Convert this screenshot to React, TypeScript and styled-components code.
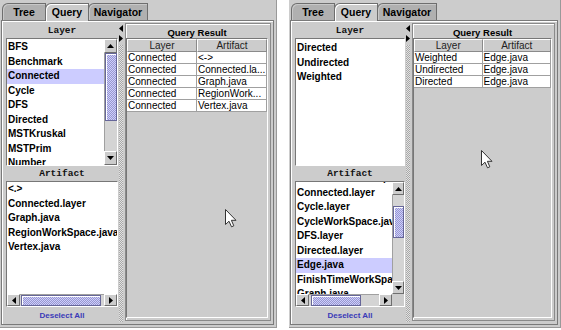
import React, { FC } from "react";
import styled, { createGlobalStyle } from "styled-components";

const GlobalStyle = createGlobalStyle`
  html, body { margin: 0; padding: 0; background: #ffffff; }
  body { font-family: "Liberation Sans", Arial, sans-serif; }
`;

const GRAY = "#cccccc";

const Page = styled.div`
  display: flex;
  gap: 12px;
  width: 561px;
  height: 330px;
  overflow: hidden;
  background: #ffffff;
`;

const Panel = styled.div<{ $w: number }>`
  position: relative;
  width: ${(p) => p.$w}px;
  flex: none;
  height: 328px;
  box-sizing: border-box;
  background: ${GRAY};
  border-right: 1px solid #999999;
  border-bottom: 1px solid #999999;
  display: flex;
  flex-direction: column;
`;

const TabRow = styled.div`
  height: 20px;
  box-sizing: border-box;
  padding: 3px 0 0 2px;
  display: flex;
  align-items: flex-end;
`;

const Tab = styled.div<{ $w: number; $active?: boolean }>`
  position: relative;
  z-index: ${(p) => (p.$active ? 1 : 0)};
  width: ${(p) => p.$w}px;
  height: ${(p) => (p.$active ? 18 : 17)}px;
  margin-bottom: ${(p) => (p.$active ? -1 : 0)}px;
  margin-right: -1px;
  box-sizing: border-box;
  border: 1px solid #6e6e6e;
  border-bottom: none;
  border-top-left-radius: 6px;
  background: ${(p) => (p.$active ? GRAY : "#b0b0b0")};
  box-shadow: inset 1px 1px 0 ${(p) => (p.$active ? "#ffffff" : "#c8c8c8")};
  display: flex;
  justify-content: center;
  padding-top: 2px;
  font-size: 10.5px;
  font-weight: bold;
  color: #000;
`;

const Content = styled.div`
  flex: 1;
  min-height: 0;
  margin: 0 2px 2px 1px;
  box-sizing: border-box;
  border: 1px solid #7a7a7a;
  box-shadow: inset 1px 1px 0 #ffffff;
  padding: 1px 1px 0 4px;
  display: flex;
`;

const LeftCol = styled.div<{ $w: number }>`
  width: ${(p) => p.$w}px;
  flex: none;
  display: flex;
  flex-direction: column;
`;

const Header = styled.div<{ $h: number }>`
  height: ${(p) => p.$h}px;
  flex: none;
  display: flex;
  align-items: center;
  justify-content: center;
  font-family: "Liberation Mono", "Courier New", monospace;
  font-weight: bold;
  font-size: 9.5px;
  color: #111;
`;

const ListBox = styled.div<{ $h: number }>`
  height: ${(p) => p.$h}px;
  flex: none;
  box-sizing: border-box;
  border: 1px solid;
  border-color: #777777 #ffffff #ffffff #777777;
  background: #ffffff;
  overflow: hidden;
  display: grid;
  grid-template-columns: minmax(0, 1fr) auto;
  grid-template-rows: minmax(0, 1fr) auto;
`;

const Viewport = styled.div`
  grid-area: 1 / 1;
  overflow: hidden;
  min-width: 0;
  min-height: 0;
`;

const ListInner = styled.div<{ $offset: number }>`
  margin-top: ${(p) => p.$offset}px;
`;

const Item = styled.div<{ $selected?: boolean }>`
  height: 14.5px;
  line-height: 14.5px;
  padding-left: 1px;
  font-size: 10px;
  font-weight: bold;
  white-space: nowrap;
  color: #000;
  background: ${(p) => (p.$selected ? "#ccccff" : "transparent")};
`;

const VBar = styled.div<{ $w: number }>`
  grid-area: 1 / 2;
  width: ${(p) => p.$w}px;
  background: ${GRAY};
  display: flex;
  flex-direction: column;
`;

const HBar = styled.div<{ $h: number }>`
  grid-area: 2 / 1;
  height: ${(p) => p.$h}px;
  background: ${GRAY};
  display: flex;
`;

const Corner = styled.div`
  grid-area: 2 / 2;
  background: ${GRAY};
`;

const ArrowBtn = styled.div<{ $w: number; $h: number }>`
  width: ${(p) => p.$w}px;
  height: ${(p) => p.$h}px;
  flex: none;
  box-sizing: border-box;
  border: 1px solid;
  border-color: #ffffff #6e6e6e #6e6e6e #ffffff;
  background: ${GRAY};
  display: flex;
  align-items: center;
  justify-content: center;
`;

const VTrack = styled.div<{ $start: number }>`
  flex: 1;
  box-sizing: border-box;
  padding-top: ${(p) => p.$start}px;
  border-left: 1px solid #a0a0a0;
  background: #d4d4d4;
  display: flex;
  flex-direction: column;
`;

const HTrack = styled.div<{ $start: number }>`
  flex: 1;
  box-sizing: border-box;
  padding-left: ${(p) => p.$start}px;
  border-top: 1px solid #a0a0a0;
  background: #d4d4d4;
  display: flex;
`;

const Thumb = styled.div<{ $size: number }>`
  flex: 0 0 ${(p) => p.$size}px;
  box-sizing: border-box;
  border: 1px solid #666699;
  box-shadow: inset 1px 1px 0 #ffffff;
  background: repeating-conic-gradient(#9999cc 0% 25%, #ccccff 0% 50%) 0 0 / 2px 2px;
`;

const ButtonRow = styled.div`
  flex: 1;
  display: flex;
  align-items: center;
  justify-content: center;
  font-size: 8px;
  font-weight: bold;
  color: #3a3ab8;
`;

const Divider = styled.div`
  width: 6px;
  flex: none;
  display: flex;
  flex-direction: column;
  align-items: center;
  padding-top: 3px;
  box-sizing: border-box;
`;

const DividerArrows = styled.div`
  display: flex;
  flex-direction: column;
  gap: 3px;
  margin-bottom: 3px;
`;

const Bumps = styled.div`
  flex: 1;
  width: 4px;
  margin-bottom: 2px;
  background: repeating-conic-gradient(#a8a8a8 0% 25%, #e2e2e2 0% 50%) 0 0 / 2px 2px;
`;

const RightCol = styled.div`
  flex: 1;
  min-width: 0;
  padding: 1px 1px 3px 1px;
  display: flex;
`;

const ResultBox = styled.div`
  flex: 1;
  min-width: 0;
  box-sizing: border-box;
  border: 1px solid #8a8a8a;
  box-shadow: inset 1px 1px 0 #ffffff;
  padding: 0 2px 2px 0;
  display: flex;
  flex-direction: column;
`;

const ResultTitle = styled.div`
  height: 14px;
  flex: none;
  box-sizing: border-box;
  padding-top: 3px;
  line-height: 11px;
  text-align: center;
  font-size: 9.5px;
  font-weight: bold;
  color: #000;
`;

const TablePane = styled.div`
  flex: 1;
  box-sizing: border-box;
  border: 1px solid;
  border-color: #777777 #ffffff #ffffff #777777;
  background: ${GRAY};
`;

const Table = styled.div`
  display: grid;
  grid-template-columns: minmax(0, 1fr) minmax(0, 1fr);
`;

const HeadCell = styled.div`
  height: 13px;
  box-sizing: border-box;
  border: 1px solid;
  border-color: #ffffff #8a8a8a #8a8a8a #ffffff;
  background: ${GRAY};
  text-align: center;
  font-size: 10px;
  line-height: 11px;
  color: #222;
`;

const Cell = styled.div`
  height: 12px;
  box-sizing: border-box;
  border-right: 1px solid #a0a0a0;
  border-bottom: 1px solid #a0a0a0;
  background: #ffffff;
  padding-left: 1px;
  font-size: 10px;
  line-height: 11px;
  white-space: nowrap;
  overflow: hidden;
  color: #000;
`;

const CursorMark = styled.svg<{ $x: number; $y: number }>`
  position: absolute;
  left: ${(p) => p.$x}px;
  top: ${(p) => p.$y}px;
`;

type Dir = "up" | "down" | "left" | "right";

const triPath: Record<Dir, string> = {
  up: "M0 4 L3.5 0 L7 4 Z",
  down: "M0 0 L7 0 L3.5 4 Z",
  left: "M4 0 L4 7 L0 3.5 Z",
  right: "M0 0 L4 3.5 L0 7 Z",
};

const Tri: FC<{ dir: Dir }> = ({ dir }) => {
  const flat = dir === "up" || dir === "down";
  return (
    <svg width={flat ? 7 : 4} height={flat ? 4 : 7} viewBox={flat ? "0 0 7 4" : "0 0 4 7"}>
      <path d={triPath[dir]} fill="#000" />
    </svg>
  );
};

const VScroll: FC<{ w: number; start: number; size: number }> = ({ w, start, size }) => (
  <VBar $w={w}>
    <ArrowBtn $w={w} $h={w + 1}>
      <Tri dir="up" />
    </ArrowBtn>
    <VTrack $start={start}>
      <Thumb $size={size} />
    </VTrack>
    <ArrowBtn $w={w} $h={w + 1}>
      <Tri dir="down" />
    </ArrowBtn>
  </VBar>
);

const HScroll: FC<{ h: number; start: number; size: number }> = ({ h, start, size }) => (
  <HBar $h={h}>
    <ArrowBtn $w={h + 1} $h={h}>
      <Tri dir="left" />
    </ArrowBtn>
    <HTrack $start={start}>
      <Thumb $size={size} />
    </HTrack>
    <ArrowBtn $w={h + 1} $h={h}>
      <Tri dir="right" />
    </ArrowBtn>
  </HBar>
);

const Cursor: FC<{ x: number; y: number }> = ({ x, y }) => (
  <CursorMark $x={x} $y={y} width="12" height="19" viewBox="0 0 12 19">
    <path
      d="M0.5 0.5 L0.5 15.5 L4 12.2 L6.5 17.8 L8.8 16.8 L6.4 11.3 L11 11.3 Z"
      fill="#ffffff"
      stroke="#333333"
      strokeWidth="1"
    />
  </CursorMark>
);

interface ListSpec {
  items: string[];
  selected?: string;
  offset: number;
  vscroll?: { w: number; start: number; size: number };
  hscroll?: { h: number; start: number; size: number };
}

const ScrollList: FC<ListSpec & { height: number }> = ({
  items,
  selected,
  offset,
  vscroll,
  hscroll,
  height,
}) => (
  <ListBox $h={height}>
    <Viewport>
      <ListInner $offset={offset}>
        {items.map((it) => (
          <Item key={it} $selected={it === selected}>
            {it}
          </Item>
        ))}
      </ListInner>
    </Viewport>
    {vscroll && <VScroll {...vscroll} />}
    {hscroll && <HScroll {...hscroll} />}
    {vscroll && hscroll && <Corner />}
  </ListBox>
);

interface QueryPanelProps {
  width: number;
  leftWidth: number;
  layers: ListSpec;
  artifacts: ListSpec;
  results: [string, string][];
  cursor: { x: number; y: number };
}

const tabs = [
  { name: "Tree", w: 44 },
  { name: "Query", w: 44, active: true },
  { name: "Navigator", w: 60 },
];

const QueryPanel: FC<QueryPanelProps> = ({
  width,
  leftWidth,
  layers,
  artifacts,
  results,
  cursor,
}) => (
  <Panel $w={width}>
    <TabRow>
      {tabs.map((t) => (
        <Tab key={t.name} $w={t.w} $active={t.active}>
          {t.name}
        </Tab>
      ))}
    </TabRow>
    <Content>
      <LeftCol $w={leftWidth}>
        <Header $h={16}>Layer</Header>
        <ScrollList height={128} {...layers} />
        <Header $h={15}>Artifact</Header>
        <ScrollList height={126} {...artifacts} />
        <ButtonRow>Deselect All</ButtonRow>
      </LeftCol>
      <Divider>
        <DividerArrows>
          <Tri dir="left" />
          <Tri dir="right" />
        </DividerArrows>
        <Bumps />
      </Divider>
      <RightCol>
        <ResultBox>
          <ResultTitle>Query Result</ResultTitle>
          <TablePane>
            <Table>
              <HeadCell>Layer</HeadCell>
              <HeadCell>Artifact</HeadCell>
              {results.map(([a, b], i) => (
                <React.Fragment key={i}>
                  <Cell>{a}</Cell>
                  <Cell>{b}</Cell>
                </React.Fragment>
              ))}
            </Table>
          </TablePane>
        </ResultBox>
      </RightCol>
    </Content>
    <Cursor x={cursor.x} y={cursor.y} />
  </Panel>
);

export default function App() {
  return (
    <>
      <GlobalStyle />
      <Page>
        <QueryPanel
          width={277}
          leftWidth={112}
          layers={{
            items: ["BFS", "Benchmark", "Connected", "Cycle", "DFS", "Directed", "MSTKruskal", "MSTPrim", "Number", "Prim"],
            selected: "Connected",
            offset: 1,
            vscroll: { w: 13, start: 0, size: 68 },
          }}
          artifacts={{
            items: ["<.>", "Connected.layer", "Graph.java", "RegionWorkSpace.java", "Vertex.java"],
            offset: 0,
            hscroll: { h: 12, start: 1, size: 80 },
          }}
          results={[
            ["Connected", "<->"],
            ["Connected", "Connected.la..."],
            ["Connected", "Graph.java"],
            ["Connected", "RegionWork..."],
            ["Connected", "Vertex.java"],
          ]}
          cursor={{ x: 225, y: 209 }}
        />
        <QueryPanel
          width={272}
          leftWidth={110}
          layers={{
            items: ["Directed", "Undirected", "Weighted"],
            offset: 2,
          }}
          artifacts={{
            items: [
              "BenchmarkWorkSpace.java",
              "Connected.layer",
              "Cycle.layer",
              "CycleWorkSpace.java",
              "DFS.layer",
              "Directed.layer",
              "Edge.java",
              "FinishTimeWorkSpace.java",
              "Graph.java",
              "Number.layer",
            ],
            selected: "Edge.java",
            offset: -10.75,
            vscroll: { w: 12, start: 11, size: 32 },
            hscroll: { h: 12, start: 2, size: 50 },
          }}
          results={[
            ["Weighted", "Edge.java"],
            ["Undirected", "Edge.java"],
            ["Directed", "Edge.java"],
          ]}
          cursor={{ x: 192, y: 150 }}
        />
      </Page>
    </>
  );
}
